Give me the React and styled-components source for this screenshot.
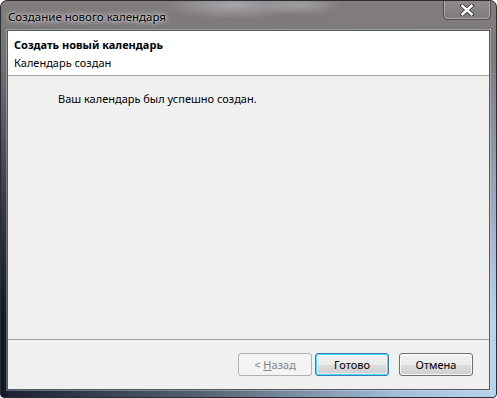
import React from 'react'
import styled, { createGlobalStyle } from 'styled-components'

const GlobalStyle = createGlobalStyle`
html, body {
  margin:0;
  padding:0;
  width:497px;
  height:398px;
  overflow:hidden;
  background:#ffffff;
}
`

const Window = styled.div`
box-sizing:border-box;
width:497px;
height:398px;
display:flex;
flex-direction:column;
border:1px solid #2a2d33;
border-radius:7px 7px 4px 4px;
overflow:hidden;
font-family:'Segoe UI', 'Noto Sans', sans-serif;
font-size:11px;
background:
  linear-gradient(180deg, rgba(130,124,124,1) 0px, rgba(122,118,120,0.95) 60px, rgba(110,110,118,0.4) 200px, rgba(0,0,0,0) 320px),
  linear-gradient(90deg, #10151f 0px, #1a2232 8px, #56626f 200px, #a4bfdc 400px, #b8d3ee 497px);
`

const TitleBar = styled.div`
height:29px;
display:flex;
align-items:flex-start;
justify-content:space-between;
padding-left:7px;
background:
  radial-gradient(ellipse 70px 14px at 232px 4px, rgba(200,200,210,0.55), rgba(0,0,0,0)),
  radial-gradient(ellipse 40px 10px at 300px 4px, rgba(200,200,210,0.45), rgba(0,0,0,0));
`

const Title = styled.div`
margin-top:8px;
font-size:11.5px;
color:#000;
text-shadow:0 0 6px rgba(255,255,255,0.9), 0 0 3px rgba(255,255,255,0.8);
`

const CloseButton = styled.div`
box-sizing:border-box;
width:48px;
height:20px;
margin-top:-1px;
margin-right:5px;
display:flex;
align-items:center;
justify-content:center;
border:1px solid #4d4b4f;
border-top:none;
border-radius:0 0 5px 5px;
box-shadow:inset 0 0 0 1px rgba(230,230,235,0.45);
background:linear-gradient(180deg, rgba(170,165,170,0.35), rgba(120,118,124,0.25));
`

const Client = styled.div`
flex:1;
margin:0 6px 7px 6px;
border:1px solid #555a62;
box-shadow:0 0 0 1px rgba(220,230,240,0.35);
display:flex;
flex-direction:column;
background:#f0f0f0;
`

const Header = styled.div`
height:45px;
box-sizing:border-box;
padding:5px 0 0 6px;
background:#ffffff;
border-bottom:1px solid #a0a0a0;
color:#000;
line-height:18px;
`

const HeaderTitle = styled.div`
font-weight:bold;
`

const Body = styled.div`
flex:1;
padding:15px 0 0 50px;
color:#000;
line-height:16px;
`

const Footer = styled.div`
height:50px;
box-sizing:border-box;
border-top:1px solid #a0a0a0;
display:flex;
justify-content:flex-end;
align-items:flex-start;
padding:13px 16px 0 0;
`

const Button = styled.button`
box-sizing:border-box;
width:74px;
height:23px;
margin-left:${p => p.gap || 0}px;
padding:0;
font-family:inherit;
font-size:11px;
border-radius:3px;
color:${p => p.disabled ? '#838383' : '#000'};
border:1px solid ${p => p.disabled ? '#adb2b5' : p.primary ? '#3c7fb1' : '#707070'};
background:${p => p.disabled
  ? '#f4f4f4'
  : 'linear-gradient(180deg, #f2f2f2 0%, #ebebeb 50%, #dddddd 51%, #cfcfcf 100%)'};
box-shadow:${p => p.disabled
  ? 'none'
  : p.primary
    ? 'inset 0 0 0 1px #48d8fb, inset 0 0 0 2px rgba(255,255,255,0.5)'
    : 'inset 0 0 0 1px rgba(255,255,255,0.8)'};
`

const Key = styled.span`
text-decoration:underline;
`

const App = () => {
  return (
    <>
      <GlobalStyle />
      <Window>
        <TitleBar>
          <Title>Создание нового календаря</Title>
          <CloseButton>
            <svg width="14" height="12" viewBox="0 0 14 12">
              <path d="M2 1.5 L12 10.5 M12 1.5 L2 10.5" stroke="#3a3a40" strokeWidth="4.2" strokeLinecap="round" />
              <path d="M2.4 1.8 L11.6 10.2 M11.6 1.8 L2.4 10.2" stroke="#ffffff" strokeWidth="2.4" strokeLinecap="square" />
            </svg>
          </CloseButton>
        </TitleBar>
        <Client>
          <Header>
            <HeaderTitle>Создать новый календарь</HeaderTitle>
            <div>Календарь создан</div>
          </Header>
          <Body>Ваш календарь был успешно создан.</Body>
          <Footer>
            <Button disabled>&lt; <Key>Н</Key>азад</Button>
            <Button primary gap={3}>Готово</Button>
            <Button gap={10}>Отмена</Button>
          </Footer>
        </Client>
      </Window>
    </>
  )
}

export default App
